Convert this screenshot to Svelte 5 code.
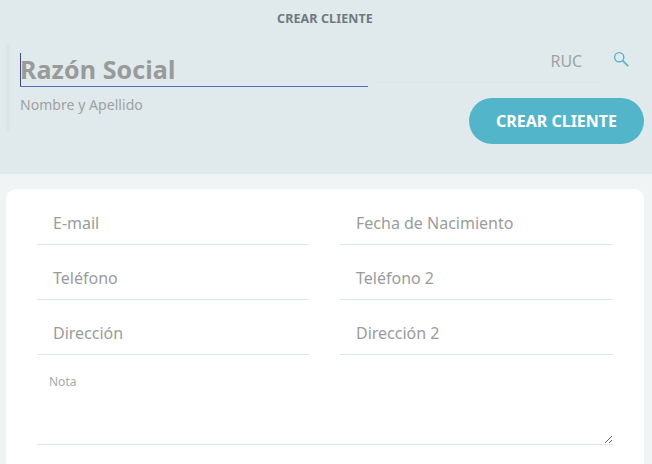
<script>
  const rows = [
    ['E-mail', 'Fecha de Nacimiento'],
    ['Teléfono', 'Teléfono 2'],
    ['Dirección', 'Dirección 2']
  ];
</script>

<div class="page">
  <header class="head">
    <h1 class="title">CREAR CLIENTE</h1>
    <div class="top">
      <div class="identity">
        <div class="name"><span class="caret"></span><span class="name-text">Razón Social</span></div>
        <div class="sub">Nombre y Apellido</div>
      </div>
      <div class="side">
        <div class="ruc">
          <span class="ruc-text">RUC</span>
          <svg class="search" viewBox="0 0 16 16" width="16" height="16" aria-hidden="true">
            <circle cx="6.2" cy="6.2" r="4.6" fill="none" stroke="currentColor" stroke-width="1.4" />
            <path d="M9.6 9.6 15.2 15.2" fill="none" stroke="currentColor" stroke-width="1.7" />
          </svg>
        </div>
        <button class="create">CREAR CLIENTE</button>
      </div>
    </div>
  </header>

  <main class="band">
    <section class="card">
      <div class="grid">
        {#each rows as row}
          {#each row as label}
            <div class="field"><span>{label}</span></div>
          {/each}
        {/each}
      </div>
      <div class="note">
        <textarea class="area" aria-label="Nota"></textarea>
        <span class="note-label">Nota</span>
      </div>
    </section>
  </main>
</div>

<style>
  :global(body) {
    margin: 0;
    background: #f0f4f5;
  }
  .page {
    width: 652px;
    height: 464px;
    overflow: hidden;
    font-family: "Noto Sans", "Open Sans", sans-serif;
    color: #999c9c;
  }
  .head {
    height: 174px;
    box-sizing: border-box;
    padding-top: 11px;
    background: #e0e9eb;
  }
  .title {
    margin: 0;
    text-align: center;
    font-size: 12.5px;
    line-height: 15px;
    font-weight: 700;
    color: #6f7a80;
    letter-spacing: 0.1px;
    transform: translateX(-1px);
  }
  .top {
    display: flex;
    align-items: flex-start;
    margin-top: 17px;
    margin-left: 6px;
  }
  .identity {
    width: 348px;
    height: 88px;
    box-sizing: content-box;
    padding-left: 10px;
    border-left: 4px solid #dbe7e6;
  }
  .name {
    display: flex;
    align-items: flex-end;
    height: 33px;
    margin-top: 10px;
    border-bottom: 1px solid #5b6bb8;
  }
  .caret {
    width: 1px;
    height: 33px;
    background: #3c4a7c;
  }
  .name-text {
    font-size: 25px;
    line-height: 33px;
    font-weight: 700;
    color: #999a9a;
    margin-left: -1px;
    letter-spacing: 0.1px;
  }
  .sub {
    margin-top: 8px;
    font-size: 14px;
    line-height: 20px;
    color: #9fa2a2;
    letter-spacing: 0.05px;
  }
  .side {
    flex: 1;
    display: flex;
    flex-direction: column;
    align-items: flex-end;
    margin-left: 10px;
  }
  .ruc {
    width: 222px;
    height: 40px;
    margin-right: 52px;
    padding-bottom: 3px;
    box-sizing: border-box;
    border-bottom: 1px solid #d9e5e6;
    position: relative;
    display: flex;
    justify-content: flex-end;
    align-items: center;
  }
  .ruc-text {
    font-size: 16px;
    color: #a0a3a3;
    letter-spacing: -0.1px;
    margin-right: 18px;
  }
  .search {
    position: absolute;
    right: -29px;
    top: 8px;
    color: #52b5ca;
  }
  .create {
    width: 175px;
    height: 46px;
    margin-top: 15px;
    margin-right: 8px;
    border: 0;
    border-radius: 23px;
    background: #52b5ca;
    color: #fff;
    font-family: inherit;
    font-size: 16px;
    font-weight: 700;
  }
  .band {
    padding: 15px 8px 0 6px;
  }
  .card {
    height: 300px;
    box-sizing: border-box;
    padding: 1px 31px 0 31px;
    background: #fff;
    border-radius: 10px 10px 0 0;
  }
  .grid {
    display: grid;
    grid-template-columns: 272px 273px;
    column-gap: 31px;
  }
  .field {
    height: 55px;
    box-sizing: border-box;
    border-bottom: 1px solid #dde7e9;
    display: flex;
    align-items: flex-end;
    padding: 0 0 10px 16px;
    font-size: 16px;
    line-height: 22px;
    color: #999c9c;
  }
  .note {
    display: grid;
    width: 576px;
    margin-top: 15px;
  }
  .area,
  .note-label {
    grid-area: 1 / 1;
  }
  .area {
    display: block;
    box-sizing: border-box;
    width: 576px;
    height: 75px;
    margin: 0;
    padding: 0;
    border: 0;
    border-bottom: 1px solid #dde7e9;
    outline: 0;
    background: transparent;
  }
  .note-label {
    margin: 4px 0 0 12px;
    font-size: 12px;
    line-height: 16px;
    color: #a8abab;
    pointer-events: none;
    align-self: start;
    justify-self: start;
  }
</style>
